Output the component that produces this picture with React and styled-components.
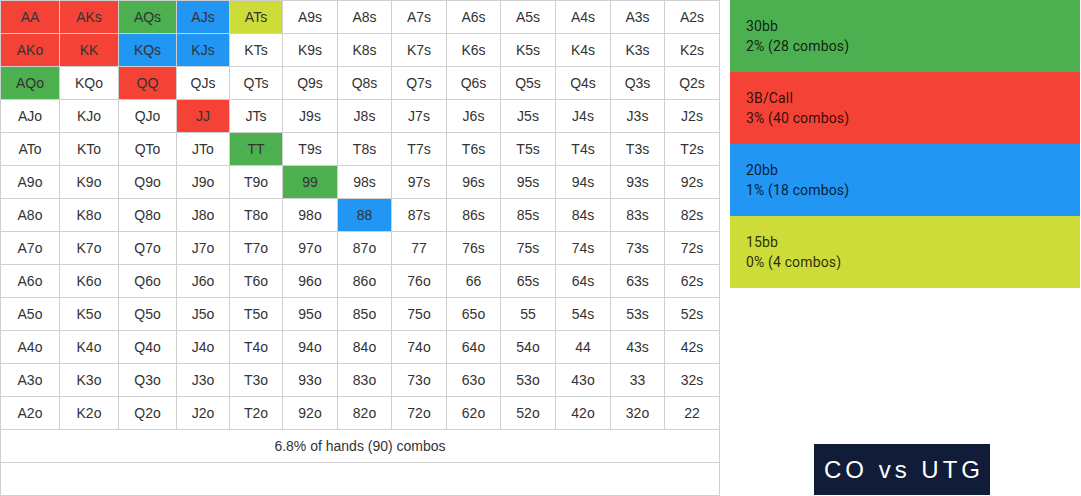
import React from "react";
import styled, { createGlobalStyle } from "styled-components";

const RANKS = ["A", "K", "Q", "J", "T", "9", "8", "7", "6", "5", "4", "3", "2"];
const COL_WIDTHS = [59, 59, 58, 53, 53, 55, 54, 55, 54, 55, 55, 54, 55];

const COLORS = {
  red: "#f44336",
  green: "#4caf50",
  blue: "#2196f3",
  lime: "#cddc39",
};

const RANGE = {
  AA: "red",
  AKs: "red",
  AKo: "red",
  KK: "red",
  QQ: "red",
  JJ: "red",
  AQs: "green",
  AQo: "green",
  TT: "green",
  99: "green",
  AJs: "blue",
  KQs: "blue",
  KJs: "blue",
  88: "blue",
  ATs: "lime",
};

const LEGEND = [
  { color: "green", title: "30bb", info: "2% (28 combos)" },
  { color: "red", title: "3B/Call", info: "3% (40 combos)" },
  { color: "blue", title: "20bb", info: "1% (18 combos)" },
  { color: "lime", title: "15bb", info: "0% (4 combos)" },
];

const handName = (row, col) => {
  if (row === col) return RANKS[row] + RANKS[col];
  if (col > row) return RANKS[row] + RANKS[col] + "s";
  return RANKS[col] + RANKS[row] + "o";
};

const App = () => {
  return (
    <>
      <GlobalStyle />
      <Page>
        <Grid>
          <colgroup>
            {COL_WIDTHS.map((w, i) => (
              <col key={i} style={{ width: w }} />
            ))}
          </colgroup>
          <tbody>
            {RANKS.map((_, row) => (
              <tr key={row}>
                {RANKS.map((_, col) => {
                  const hand = handName(row, col);
                  return (
                    <Cell key={col} $bg={COLORS[RANGE[hand]]}>
                      {hand}
                    </Cell>
                  );
                })}
              </tr>
            ))}
            <tr>
              <Footer colSpan={13}>6.8% of hands (90) combos</Footer>
            </tr>
            <tr>
              <Footer colSpan={13} />
            </tr>
          </tbody>
        </Grid>
        <Side>
          {LEGEND.map((item) => (
            <LegendItem key={item.title} $bg={COLORS[item.color]}>
              <span>{item.title}</span>
              <span>{item.info}</span>
            </LegendItem>
          ))}
          <Badge>CO vs UTG</Badge>
        </Side>
      </Page>
    </>
  );
};

const GlobalStyle = createGlobalStyle`
  body {
    margin: 0;
    background: #fff;
    font-family: "Liberation Sans", Arial, sans-serif;
  }
`;

const Page = styled.div`
  display: flex;
  width: 1081px;
  height: 496px;
  overflow: hidden;
`;

const Grid = styled.table`
  table-layout: fixed;
  border-collapse: collapse;
  width: 720px;
  height: 496px;
  flex: none;
  border: 1px solid #cfcfcf;
  font-size: 14px;
  color: #333;
`;

const Cell = styled.td`
  height: 32px;
  padding: 0;
  text-align: center;
  border: 1px solid #cfcfcf;
  background-color: ${(p) => p.$bg || "#fff"};
`;

const Footer = styled.td`
  height: 32px;
  padding: 0;
  text-align: center;
  border: 1px solid #cfcfcf;
`;

const Side = styled.div`
  display: flex;
  flex-direction: column;
  width: 350px;
  margin-left: 10px;
`;

const LegendItem = styled.div`
  display: flex;
  flex-direction: column;
  justify-content: center;
  height: 72px;
  padding-left: 16px;
  box-sizing: border-box;
  background-color: ${(p) => p.$bg};
  font-family: Roboto, "Liberation Sans", sans-serif;
  font-size: 14px;
  line-height: 20px;
  letter-spacing: 0.15px;
  color: rgba(0, 0, 0, 0.82);
`;

const Badge = styled.div`
  align-self: center;
  margin-top: auto;
  margin-bottom: 1px;
  margin-right: 6px;
  width: 176px;
  height: 51px;
  display: flex;
  align-items: center;
  justify-content: center;
  background-color: #101c38;
  color: #fff;
  font-family: "Liberation Sans", Arial, sans-serif;
  font-size: 24px;
  font-weight: 400;
  letter-spacing: 4px;
  text-indent: 4px;
`;

export default App;
